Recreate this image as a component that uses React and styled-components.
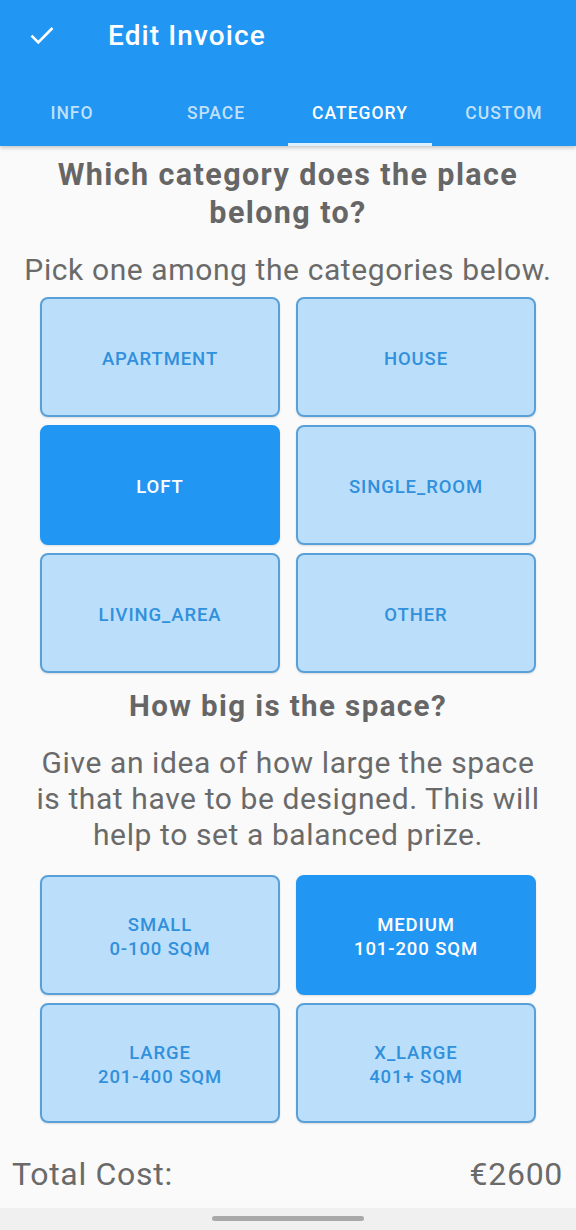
import React, { useState } from 'react';
import styled, { createGlobalStyle } from 'styled-components';

const GlobalStyle = createGlobalStyle`
    html, body {
        margin: 0;
        padding: 0;
        background: #fafafa;
    }
    body {
        font-family: Roboto, "Liberation Sans", sans-serif;
    }
`;

const Page = styled.div`
    width: 576px;
    min-height: 1230px;
    display: flex;
    flex-direction: column;
    background: #fafafa;
`;

const AppBar = styled.header`
    background: #2196f3;
    color: #fff;
    box-shadow: 0 2px 4px rgba(0, 0, 0, 0.2);
    display: flex;
    flex-direction: column;
`;

const TitleRow = styled.div`
    height: 72px;
    display: flex;
    align-items: center;
    padding-left: 28px;
    padding-bottom: 2px;
    box-sizing: border-box;
`;

const CheckButton = styled.button`
    background: none;
    border: none;
    padding: 0;
    width: 28px;
    height: 28px;
    display: flex;
    align-items: center;
    justify-content: center;
    cursor: pointer;
`;

const Title = styled.h1`
    margin: 0 0 0 52px;
    font-size: 28px;
    font-weight: 500;
    letter-spacing: 1.1px;
`;

const Tabs = styled.nav`
    display: grid;
    grid-template-columns: repeat(4, 1fr);
    height: 74px;
`;

const Tab = styled.button`
    background: none;
    border: none;
    font-family: Roboto, "Liberation Sans", sans-serif;
    font-size: 17.5px;
    font-weight: 500;
    letter-spacing: 1px;
    color: ${(props) => (props.active ? '#ffffff' : 'rgba(255, 255, 255, 0.72)')};
    border-bottom: 3px solid ${(props) => (props.active ? '#dcefff' : 'transparent')};
    padding: 10px 0 0;
    cursor: pointer;
`;

const Content = styled.main`
    flex: 1;
    display: flex;
    flex-direction: column;
    align-items: center;
    padding: 10px 40px 0;
`;

const Heading = styled.h2`
    margin: 0;
    font-size: 30.5px;
    line-height: 38px;
    font-weight: 700;
    letter-spacing: 1.4px;
    color: #666;
    text-align: center;
`;

const Subtitle = styled.p`
    margin: 20px -20px 0;
    max-width: ${(props) => props.maxWidth || 'none'};
    font-size: 30px;
    line-height: 36px;
    letter-spacing: 0.6px;
    color: #6a6a6a;
    text-align: center;
`;

const OptionGrid = styled.div`
    margin-top: ${(props) => props.top};
    width: 100%;
    display: grid;
    grid-template-columns: 1fr 1fr;
    grid-auto-rows: 120px;
    column-gap: 16px;
    row-gap: 8px;
`;

const Option = styled.button`
    border-radius: 8px;
    border: 2px solid ${(props) => (props.selected ? '#2196f3' : '#5aa0d8')};
    background: ${(props) => (props.selected ? '#2196f3' : '#bbdefb')};
    color: ${(props) => (props.selected ? '#ffffff' : '#3190dc')};
    font-family: Roboto, "Liberation Sans", sans-serif;
    font-size: 18.5px;
    font-weight: 500;
    letter-spacing: 0.9px;
    line-height: 24px;
    padding: 3px 0 0;
    box-shadow: 0 1px 2px rgba(0, 0, 0, 0.12);
    cursor: pointer;
    display: flex;
    flex-direction: column;
    align-items: center;
    justify-content: center;
`;

const SectionHeading = styled(Heading)`
    margin-top: 14px;
    font-size: 29.5px;
`;

const TotalRow = styled.footer`
    display: flex;
    justify-content: space-between;
    align-items: center;
    padding: 21px 13px 7px 12px;
    height: 54px;
    font-size: 32px;
    letter-spacing: 0.7px;
    color: #6a6a6a;
`;

const NavBar = styled.div`
    height: 22px;
    background: #f0f0f0;
    display: flex;
    justify-content: center;
    padding-top: 8px;
    box-sizing: border-box;
`;

const Handle = styled.div`
    width: 152px;
    height: 5px;
    border-radius: 3px;
    background: #a9a9a9;
`;

const tabs = ['INFO', 'SPACE', 'CATEGORY', 'CUSTOM'];
const categories = ['APARTMENT', 'HOUSE', 'LOFT', 'SINGLE_ROOM', 'LIVING_AREA', 'OTHER'];
const sizes = [
    ['SMALL', '0-100 SQM'],
    ['MEDIUM', '101-200 SQM'],
    ['LARGE', '201-400 SQM'],
    ['X_LARGE', '401+ SQM'],
];

const App = () => {
    const [tab, setTab] = useState('CATEGORY');
    const [category, setCategory] = useState('LOFT');
    const [size, setSize] = useState('MEDIUM');

    return (
        <Page>
            <GlobalStyle />
            <AppBar>
                <TitleRow>
                    <CheckButton aria-label="save">
                        <svg width="28" height="28" viewBox="0 0 24 24" fill="none">
                            <path d="M3 12.5l5.8 5.8L21 6" stroke="#fff" strokeWidth="2.3" />
                        </svg>
                    </CheckButton>
                    <Title>Edit Invoice</Title>
                </TitleRow>
                <Tabs>
                    {tabs.map((t) => (
                        <Tab key={t} active={t === tab} onClick={() => setTab(t)}>{t}</Tab>
                    ))}
                </Tabs>
            </AppBar>
            <Content>
                <Heading>Which category does the place belong to?</Heading>
                <Subtitle>Pick one among the categories below.</Subtitle>
                <OptionGrid top="9px">
                    {categories.map((c) => (
                        <Option key={c} selected={c === category} onClick={() => setCategory(c)}>{c}</Option>
                    ))}
                </OptionGrid>
                <SectionHeading>How big is the space?</SectionHeading>
                <Subtitle maxWidth="515px">
                    Give an idea of how large the space is that have to be designed. This will help to set a balanced prize.
                </Subtitle>
                <OptionGrid top="22px">
                    {sizes.map(([name, range]) => (
                        <Option key={name} selected={name === size} onClick={() => setSize(name)}>
                            <span>{name}</span>
                            <span>{range}</span>
                        </Option>
                    ))}
                </OptionGrid>
            </Content>
            <TotalRow>
                <span>Total Cost:</span>
                <span>€2600</span>
            </TotalRow>
            <NavBar>
                <Handle />
            </NavBar>
        </Page>
    );
};

export default App;
